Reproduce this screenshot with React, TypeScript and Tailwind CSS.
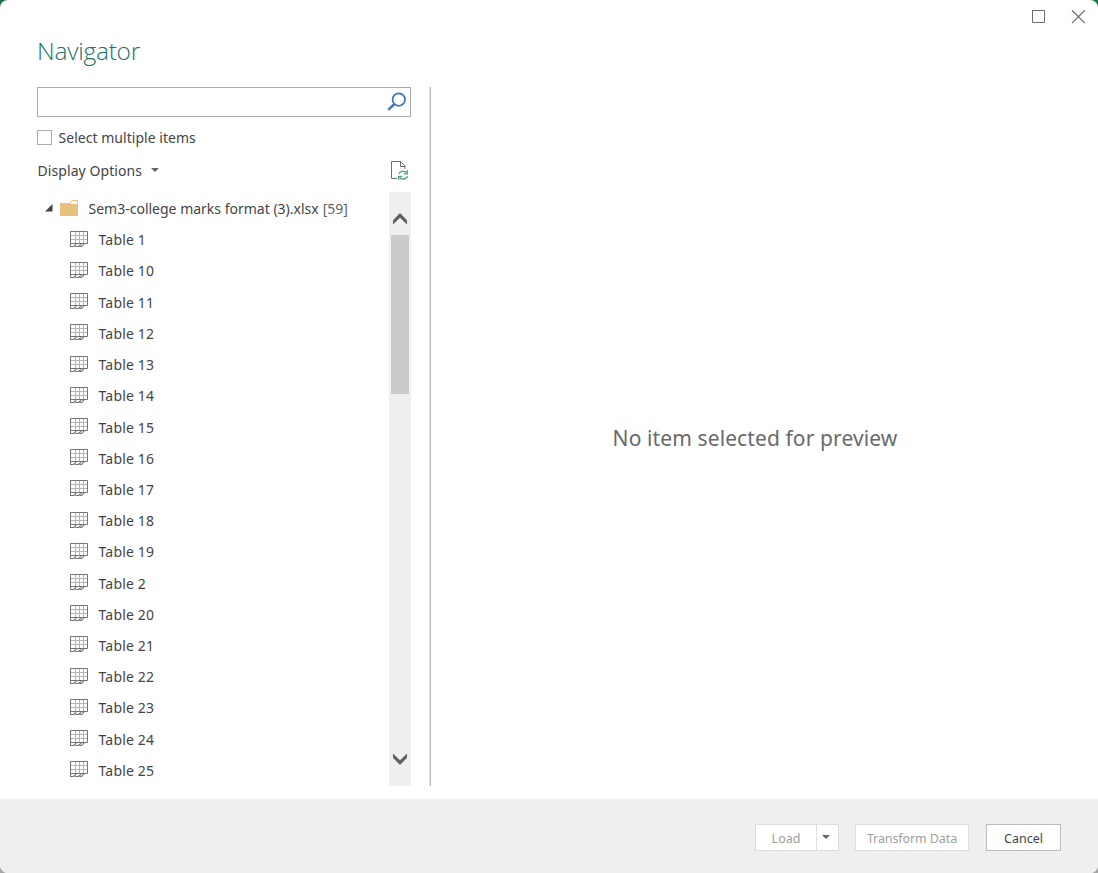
import React from "react";

const tables = [1, 10, 11, 12, 13, 14, 15, 16, 17, 18, 19, 2, 20, 21, 22, 23, 24, 25];

function TableIcon() {
  return (
    <svg className="block shrink-0" width="18" height="16" viewBox="0 0 18 16" fill="none">
      <path d="M1 4.5H17M1 8.5H17M5.5 1V12M9.5 1V12M13.5 1V12" stroke="#b4b4b4" />
      <path d="M0.5 16V0.5H17.5V12.5H0.5" stroke="#757575" />
      <path d="M0.5 15.5H3.8L6.2 13M5.2 15.5H8.2L11.4 13.2M9.6 15.5H11.6L14 12.8" stroke="#757575" strokeWidth="1.1" />
    </svg>
  );
}

function CaretDown() {
  return (
    <svg className="block" width="8" height="4" viewBox="0 0 8 4">
      <path d="M0 0H8L4 4Z" fill="#666" />
    </svg>
  );
}

function ScrollChevron({ down = false }: { down?: boolean }) {
  return (
    <svg className={down ? "block rotate-180" : "block"} width="14" height="12" viewBox="0 0 14 12">
      <path d="M0 11.5V7.2L7 0L14 7.2V11.5L7 4.8Z" fill="#606060" />
    </svg>
  );
}

export default function App() {
  return (
    <div className="h-[873px] w-[1098px] overflow-hidden bg-[linear-gradient(#217346_50%,#a6a6a6_50%)] font-['Noto_Sans',sans-serif] text-[14px] text-[#444]">
      <div className="flex h-full flex-col overflow-hidden rounded-[8px] bg-white">
        <header className="flex h-[87px] shrink-0 justify-between pl-[37px] pr-[13px]">
          <h1 className="pt-[33px] font-['Open_Sans',sans-serif] text-[24.5px] font-light leading-[36px] tracking-[-0.25px] text-[#217367]">Navigator</h1>
          <div className="flex gap-[26px] pt-[10px]">
            <svg width="14" height="14" viewBox="0 0 14 14" fill="none">
              <path d="M1 0.5H13.5V12.5H1.5V0.5" stroke="#6b6b6b" />
            </svg>
            <svg width="14" height="14" viewBox="0 0 14 14" fill="none">
              <path d="M1 0.3L13.8 13.1M13.8 0.3L1 13.1" stroke="#6b6b6b" strokeWidth="1.2" />
            </svg>
          </div>
        </header>
        <main className="flex h-[712px] shrink-0 pb-[13px] pl-[37px]">
          <section className="flex w-[374px] shrink-0 flex-col">
            <div className="flex h-[30px] shrink-0 items-start justify-end border border-[#ababab] pr-[4px] pt-[4px]">
              <svg width="19" height="20" viewBox="0 0 19 20" fill="none" stroke="#3f77b9">
                <circle cx="11.8" cy="7.6" r="6.2" strokeWidth="1.8" />
                <path d="M7.5 12L1.2 17.9" strokeWidth="2.4" />
              </svg>
            </div>
            <label className="flex h-[41px] shrink-0 items-center">
              <span className="mr-[6.5px] h-[15px] w-[15px] border border-[#ababab]" />
              <span className="whitespace-pre tracking-[0.03px]">Select multiple items</span>
            </label>
            <div className="flex h-[34px] shrink-0 items-start">
              <span className="mt-[-5px] flex h-[34px] items-center gap-[9px] whitespace-pre pl-[0.5px] pt-[1px] tracking-[0.08px]">
                Display Options
                <span className="pb-[2px]">
                  <CaretDown />
                </span>
              </span>
              <svg className="ml-auto mr-[3px] mt-[3px]" width="18" height="20" viewBox="0 0 18 20" fill="none">
                <path d="M7 17.5H1.5V0.5H10.5L15 5V8M10.5 0.5V5.5H15" stroke="#6e6e6e" />
                <g stroke="#65a88c" strokeWidth="1.6" transform="translate(0.8 0)">
                  <path d="M8 12.8C9.2 9.9 14.2 9.2 16 12M16.8 15.2C15.5 18.3 10.5 19 8.5 16.2" />
                  <path d="M16.6 9V12.8H12.8M7.8 19V15.3H11.6" strokeWidth="1.3" />
                </g>
              </svg>
            </div>
            <div className="flex min-h-0 flex-1">
              <div className="min-w-0 flex-1 overflow-hidden">
                <div className="flex h-[31.2px] items-center whitespace-pre pl-[8px] pt-[2px]">
                  <svg className="mb-[2px]" width="8" height="8" viewBox="0 0 8 8">
                    <path d="M7.5 0V7.5H0Z" fill="#444" />
                  </svg>
                  <svg className="mb-[2px] ml-[7px] mr-[10.5px]" width="18" height="16" viewBox="0 0 18 16">
                    <path d="M10 3.5L12 0.5H17.5V5" fill="white" stroke="#e8c080" />
                    <path d="M0 3H9.5L11 4H18V16H0Z" fill="#e8c080" />
                  </svg>
                  <span>Sem3-college marks format (3).xlsx</span>
                  <span className="ml-[4px] text-[#666]">[59]</span>
                </div>
                {tables.map((n) => (
                  <div key={n} className="flex h-[31.21px] items-center gap-[10.5px] whitespace-pre pl-[33px]">
                    <TableIcon />
                    <span className="pt-[2px] tracking-[0.18px]">Table {n}</span>
                  </div>
                ))}
              </div>
              <div className="flex w-[22px] shrink-0 flex-col items-center bg-[#efefef] pb-[21px] pt-[21px]">
                <ScrollChevron />
                <div className="mt-[10px] h-[159px] w-[18px] bg-[#cbcbcb]" />
                <div className="flex-1" />
                <ScrollChevron down />
              </div>
            </div>
          </section>
          <div className="ml-[18px] w-[2px] shrink-0 border-l border-[#e6e6e6] bg-[#b8b8b8]" />
          <section className="flex flex-1 items-center justify-center whitespace-nowrap pr-[19px] pt-[5px] text-[21px] tracking-[0.11px] text-[#6a6a6a]">
            No item selected for preview
          </section>
        </main>
        <footer className="flex flex-1 items-start justify-end bg-[#efefef] pr-[37px] pt-[25px] text-[12.5px] text-[#a0a0a0]">
          <div className="mr-[16px] flex h-[27px] w-[84px] border border-[#dedede] bg-white">
            <button className="w-[61px] border-r border-[#dedede] pt-[3px]">Load</button>
            <button className="flex flex-1 items-center justify-center pb-[2px] pr-[3px]">
              <CaretDown />
            </button>
          </div>
          <button className="mr-[17px] h-[27px] w-[114px] whitespace-nowrap border border-[#dedede] bg-white pt-[3px] tracking-[-0.1px]">Transform Data</button>
          <button className="h-[27px] w-[75px] border border-[#bdbdbd] bg-white pt-[3px] text-[#444]">Cancel</button>
        </footer>
      </div>
    </div>
  );
}
